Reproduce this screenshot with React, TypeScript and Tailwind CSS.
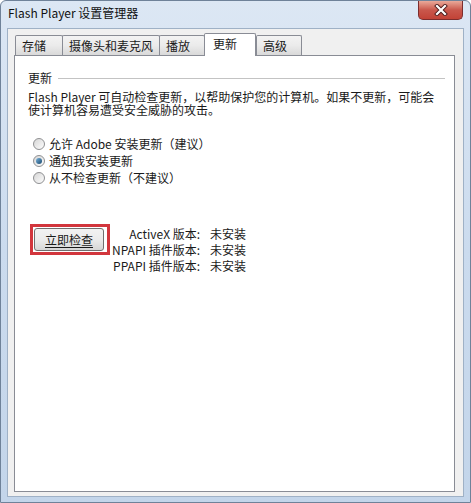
const font = "font-['Noto_Sans_CJK_SC','Liberation_Sans',sans-serif]"

const tabs = [
  { label: "存储", w: "w-[48px]" },
  { label: "摄像头和麦克风", w: "w-[98px]" },
  { label: "播放", w: "w-[46px]" },
  { label: "更新", w: "w-[52px]", active: true },
  { label: "高级", w: "w-[46px]" },
]

const Radio = ({ checked, label }: { checked?: boolean; label: string }) => (
  <div className="flex items-center h-[17px]">
    <div className="w-[12px] h-[12px] rounded-full border border-[#8f9092] bg-gradient-to-br from-[#d6d6d6] to-[#fdfdfd] flex items-center justify-center ml-[5px]">
      {checked && <div className="w-[6px] h-[6px] rounded-full bg-gradient-to-br from-[#7ab4dc] to-[#17496f]" />}
    </div>
    <span className="ml-[4px]">{label}</span>
  </div>
)

const versions = [
  ["ActiveX 版本:", "未安装"],
  ["NPAPI 插件版本:", "未安装"],
  ["PPAPI 插件版本:", "未安装"],
]

export default function App() {
  return (
    <div className={`${font} text-[12px] text-[#1a1a1a] w-[471px] h-[503px] flex flex-col border border-[#6f8299] rounded-t-[6px] bg-gradient-to-b from-[#dce7f4] via-[#cbdbee] to-[#c3d5ea]`}>
      <div className="h-[27px] flex justify-between items-start">
        <div className="pl-[7px] pt-[4px] leading-[16px] text-[#111]">Flash Player 设置管理器</div>
        <div className="mr-[7px] w-[45px] h-[19px] rounded-b-[5px] border border-t-0 border-[#7c2d2d] bg-gradient-to-b from-[#e9a99a] via-[#c9574c] to-[#c24236] flex items-center justify-center">
          <svg width="14" height="12" viewBox="0 0 14 12">
            <path d="M3 2 L11 10 M11 2 L3 10" stroke="#4a1a1a" strokeWidth="4" strokeLinecap="square" />
            <path d="M3 2 L11 10 M11 2 L3 10" stroke="#ffffff" strokeWidth="2.2" strokeLinecap="square" />
          </svg>
        </div>
      </div>
      <div className="flex-1 mx-[6px] mb-[5px] bg-[#f0f0f0] border border-[#9fb1c6] pt-[4px] pl-[6px] pr-[8px] pb-[4px] flex flex-col">
        <div className="h-[22px] flex items-end pl-[1px]">
          {tabs.map((t) =>
            t.active ? (
              <div key={t.label} className={`${t.w} h-[23px] -mb-px relative z-10 bg-white border border-b-0 border-[#898c95] rounded-t-[2px] pl-[8px] pt-[2px] leading-[16px]`}>
                {t.label}
              </div>
            ) : (
              <div key={t.label} className={`${t.w} h-[20px] bg-gradient-to-b from-[#f3f3f3] via-[#ebebeb] to-[#d9d9d9] border border-b-0 border-[#898c95] rounded-t-[2px] pl-[6px] pt-[2px] leading-[16px] -mr-px`}>
                {t.label}
              </div>
            )
          )}
        </div>
        <div className="flex-1 bg-white border border-[#898c95] pl-[13px] pr-[9px] pt-[15px]">
          <div className="flex items-center h-[14px]">
            <span>更新</span>
            <div className="flex-1 h-px bg-[#c3c3c3] ml-[6px]" />
          </div>
          <p className="mt-[6px] leading-[12.5px]">
            Flash Player 可自动检查更新，以帮助保护您的计算机。如果不更新，可能会使计算机容易遭受安全威胁的攻击。
          </p>
          <div className="mt-[19px] flex flex-col">
            <Radio label="允许 Adobe 安装更新（建议）" />
            <Radio checked label="通知我安装更新" />
            <Radio label="从不检查更新（不建议）" />
          </div>
          <div className="mt-[38px] flex items-start">
            <div className="ml-[2px] border-[3px] border-[#d2363d] p-[1px] pr-[3px]">
              <button className="w-[70px] h-[23px] rounded-[3px] border border-[#707070] bg-gradient-to-b from-[#f2f2f2] via-[#ebebeb] to-[#d6d6d6] leading-[16px]">
                <span className="underline underline-offset-2">立即检查</span>
              </button>
            </div>
            <div className="mt-[2px] ml-[2px] grid grid-cols-[auto_auto] gap-x-[10px] leading-[16px]">
              {versions.map(([k, v]) => (
                <div key={k} className="contents">
                  <span className="text-right">{k}</span>
                  <span>{v}</span>
                </div>
              ))}
            </div>
          </div>
        </div>
      </div>
    </div>
  )
}
